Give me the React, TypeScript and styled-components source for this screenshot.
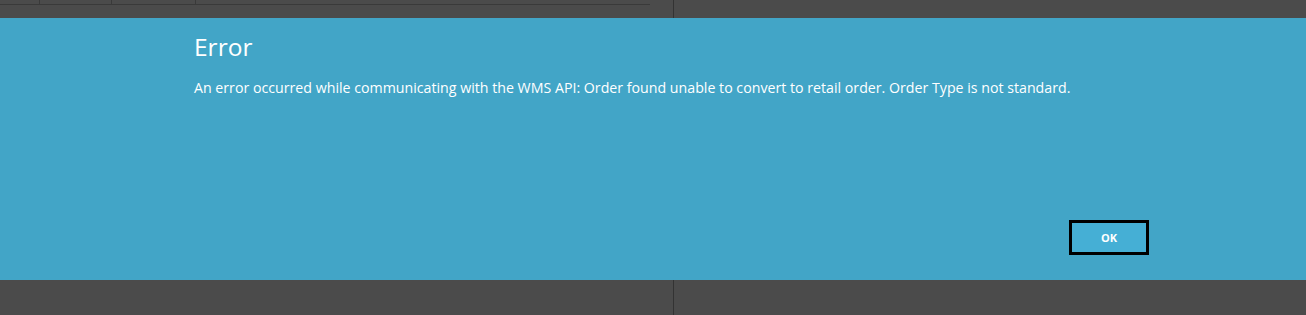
import React from 'react';
import styled, { createGlobalStyle } from 'styled-components';

const GlobalStyle = createGlobalStyle`
  body {
    margin: 0;
    background: #4b4b4b;
    font-family: "Open Sans", "Liberation Sans", sans-serif;
  }
`;

const Page = styled.div`
  width: 1306px;
  height: 315px;
  display: flex;
  flex-direction: column;
  overflow: hidden;
`;

const Strip = styled.div<{ $h: number }>`
  height: ${p => p.$h}px;
  display: flex;
  background: #4b4b4b;
`;

const LeftPane = styled.div`
  width: 674px;
  border-right: 1px solid #333;
  box-sizing: border-box;
`;

const HeaderRow = styled.div`
  width: 650px;
  height: 4px;
  display: flex;
  border-bottom: 1px solid #3a3a3a;
`;

const HeaderCell = styled.div<{ $w: number }>`
  width: ${p => p.$w}px;
  border-right: 1px solid #3a3a3a;
`;

const Band = styled.div`
  height: 262px;
  background: #42a5c7;
  display: flex;
  flex-direction: column;
  padding: 14px 157px 25px 194px;
  box-sizing: border-box;
  color: #fff;
`;

const Title = styled.h2`
  margin: 0;
  font-size: 24.5px;
  font-weight: 400;
  line-height: 30px;
`;

const Message = styled.p`
  margin: 17px 0 0;
  font-size: 14.2px;
  line-height: 18px;
`;

const Footer = styled.div`
  margin-top: auto;
  display: flex;
  justify-content: flex-end;
`;

const OkButton = styled.button`
  width: 80px;
  height: 35px;
  background: #45afd5;
  border: 3px solid #000;
  color: #fff;
  font-family: "Open Sans", "Liberation Sans", sans-serif;
  font-weight: 700;
  font-size: 11px;
  cursor: pointer;
`;

export default function App() {
  return (
    <Page>
      <GlobalStyle />
      <Strip $h={18}>
        <LeftPane>
          <HeaderRow>
            <HeaderCell $w={39} />
            <HeaderCell $w={71} />
            <HeaderCell $w={83} />
          </HeaderRow>
        </LeftPane>
      </Strip>
      <Band>
        <Title>Error</Title>
        <Message>
          An error occurred while communicating with the WMS API: Order found unable to convert to retail order. Order Type is not standard.
        </Message>
        <Footer>
          <OkButton>OK</OkButton>
        </Footer>
      </Band>
      <Strip $h={35}>
        <LeftPane />
      </Strip>
    </Page>
  );
}
